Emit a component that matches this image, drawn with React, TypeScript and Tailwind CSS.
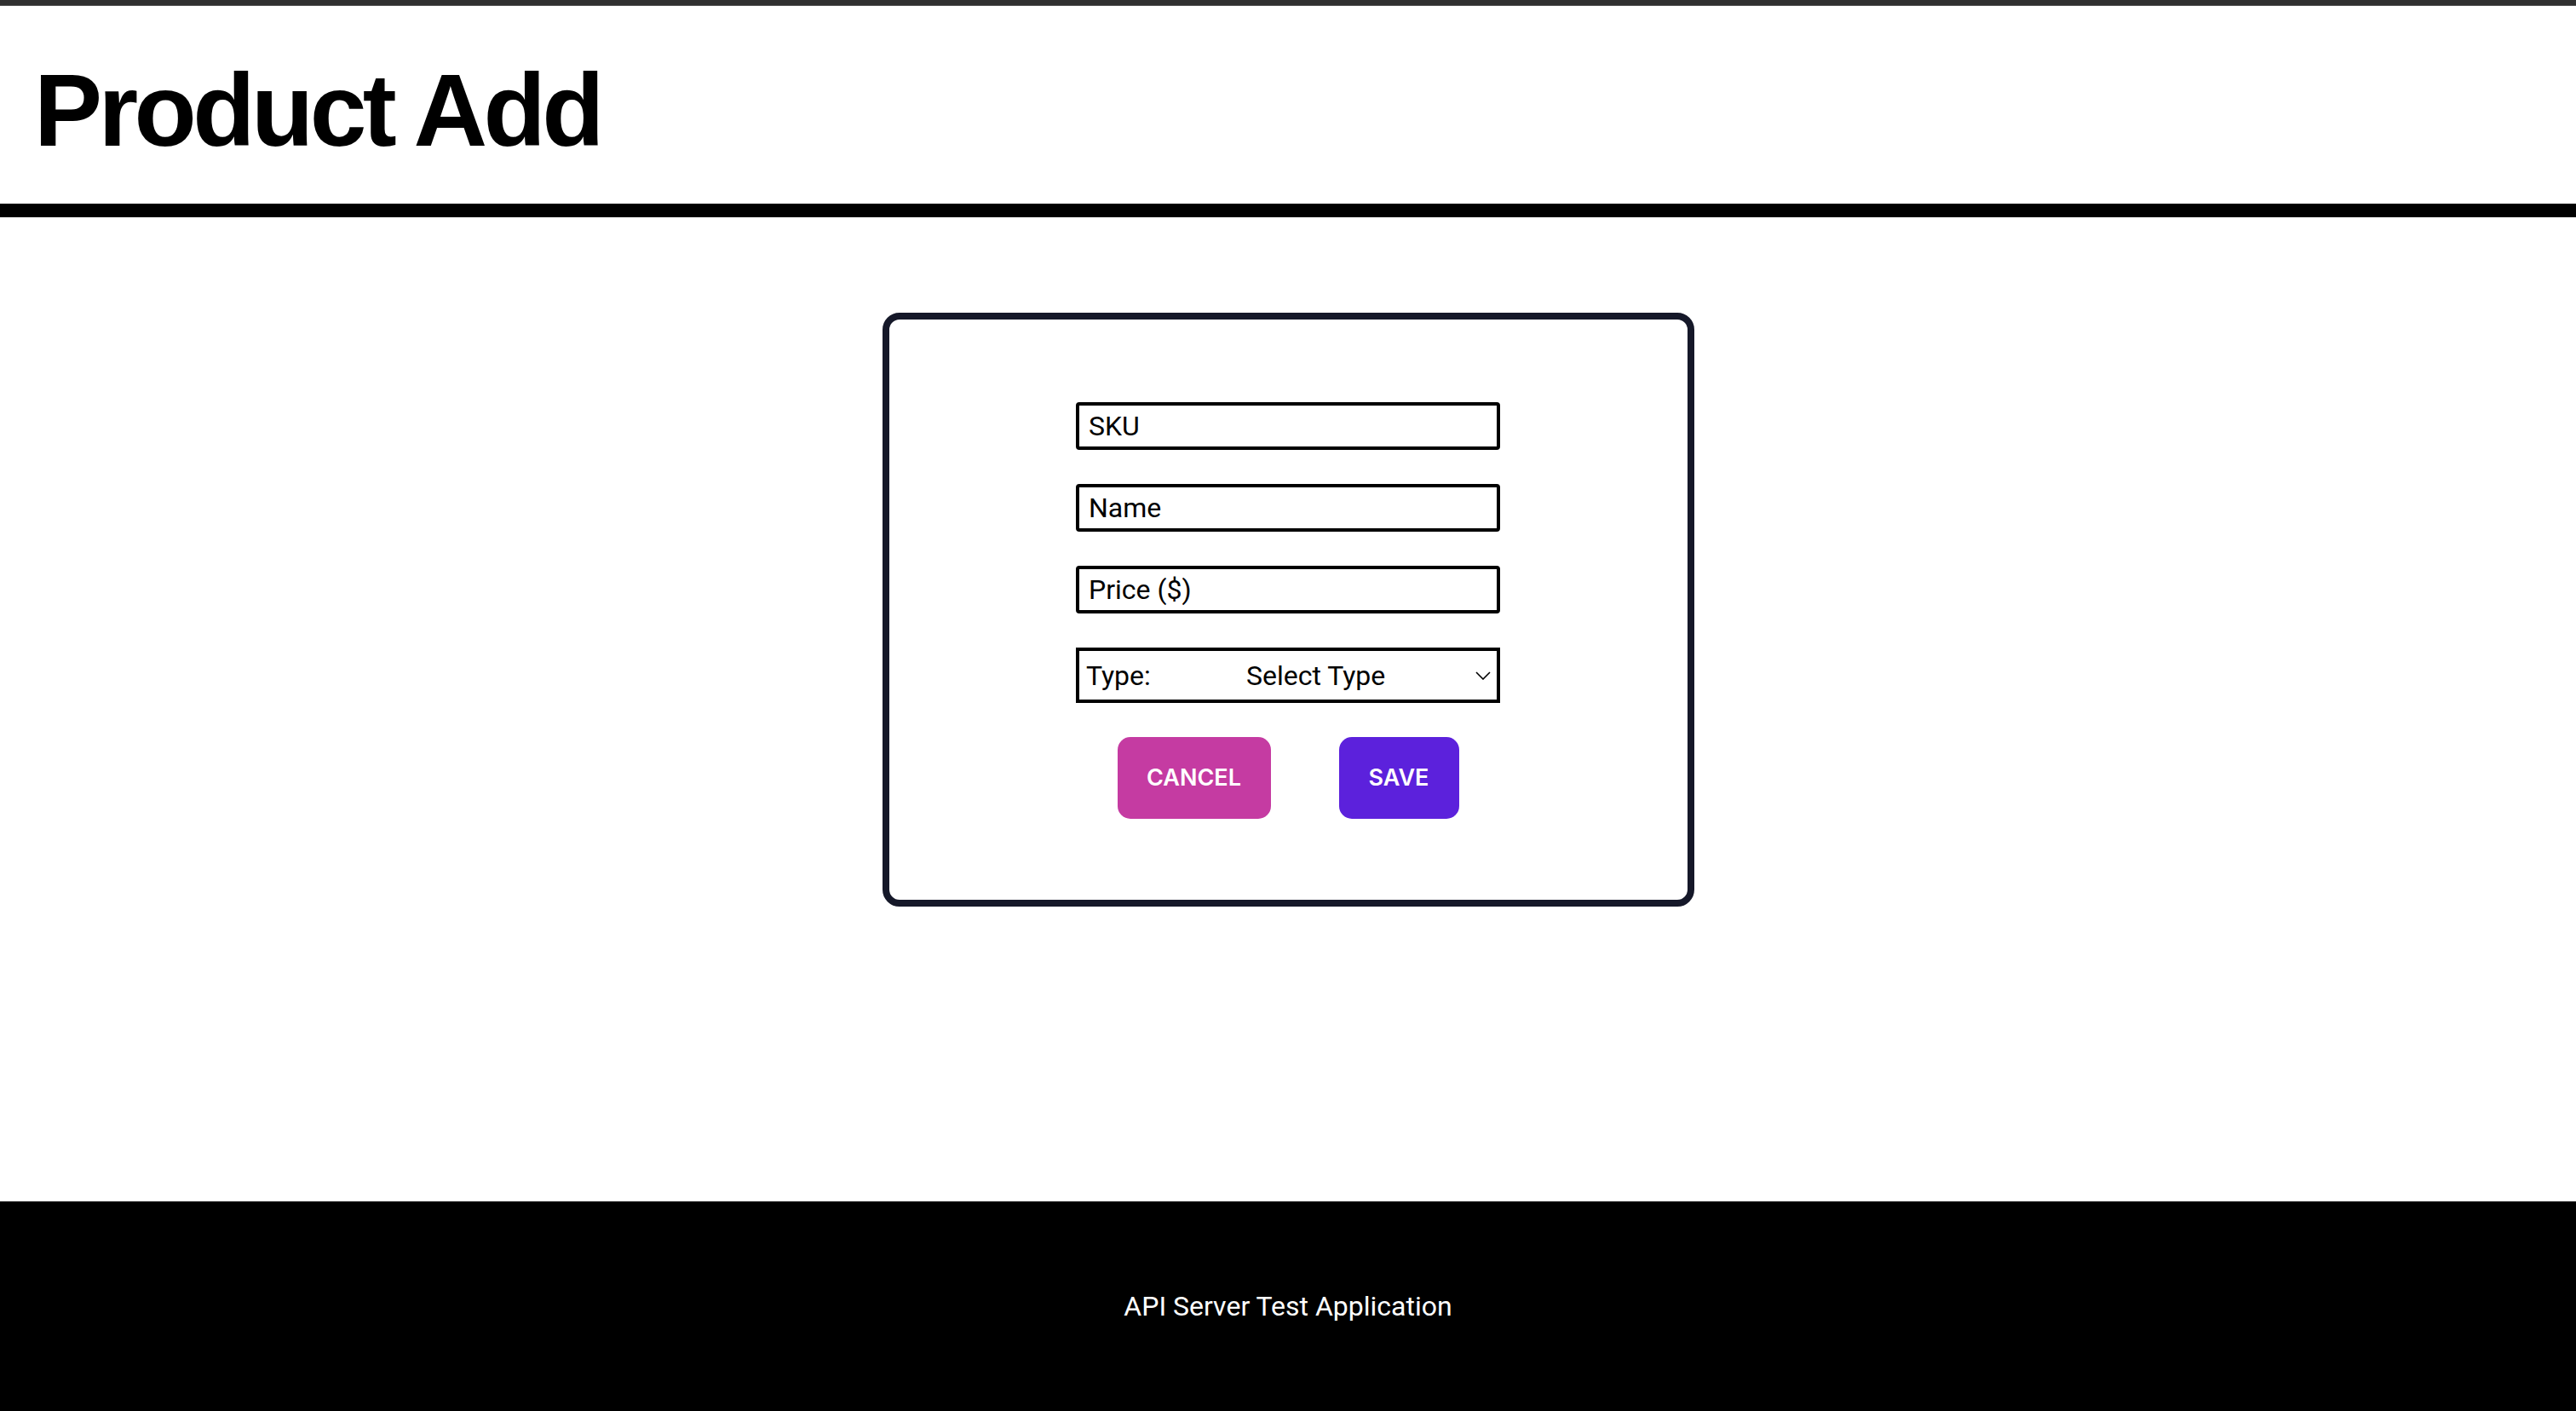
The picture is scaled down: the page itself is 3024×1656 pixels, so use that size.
import { useState } from 'react';

const fieldClass =
  'h-[56px] w-full rounded-[4px] border-4 border-black bg-white px-[11px] text-[32px] text-black outline-none placeholder:text-black';

export default function App() {
  const [sku, setSku] = useState('');
  const [name, setName] = useState('');
  const [price, setPrice] = useState('');
  const [type, setType] = useState('');

  return (
    <div className="flex min-h-screen flex-col bg-white font-['Roboto',sans-serif]">
      <div className="h-[7px] border-b border-[#555555] bg-[#303030]" />

      <header className="h-[232px] px-10 pt-[62px]">
        <h1 className="font-['Liberation_Sans',Arial,sans-serif] text-[120px] font-bold leading-[120px] tracking-[-4.6px] text-black">
          Product Add
        </h1>
      </header>
      <div className="h-4 bg-black" />

      <main className="flex flex-1 justify-center pt-[112px]">
        <div className="flex h-[697px] w-[953px] justify-center rounded-[20px] border-8 border-[#151829] pt-[97px]">
          <form className="flex w-[498px] flex-col gap-10" onSubmit={(e) => e.preventDefault()}>
            <input
              type="text"
              value={sku}
              onChange={(e) => setSku(e.target.value)}
              placeholder="SKU"
              className={fieldClass}
            />
            <input
              type="text"
              value={name}
              onChange={(e) => setName(e.target.value)}
              placeholder="Name"
              className={fieldClass}
            />
            <input
              type="text"
              value={price}
              onChange={(e) => setPrice(e.target.value)}
              placeholder="Price ($)"
              className={fieldClass}
            />

            <div className="flex h-[65px] items-center border-4 border-black text-[32px] text-black">
              <label htmlFor="productType" className="w-[196px] shrink-0 pl-[8px]">
                Type:
              </label>
              <select
                id="productType"
                value={type}
                onChange={(e) => setType(e.target.value)}
                className="min-w-0 flex-1 appearance-none bg-transparent text-[32px] text-black outline-none"
              >
                <option value="">Select Type</option>
                <option value="dvd">DVD</option>
                <option value="book">Book</option>
                <option value="furniture">Furniture</option>
              </select>
              <svg viewBox="0 0 18 10" className="mr-[7px] h-[10px] w-[18px] shrink-0" fill="none">
                <polyline points="1,1 9,9 17,1" stroke="black" strokeWidth="1.6" />
              </svg>
            </div>

            <div className="flex justify-center gap-20 font-['Inter',sans-serif]">
              <button
                type="button"
                className="h-[96px] w-[180px] rounded-[15px] bg-[#c53ba2] text-[27px] font-semibold uppercase text-white"
              >
                Cancel
              </button>
              <button
                type="submit"
                className="h-[96px] w-[141px] rounded-[15px] bg-[#5c21dc] text-[27px] font-semibold uppercase text-white"
              >
                Save
              </button>
            </div>
          </form>
        </div>
      </main>

      <footer className="flex h-[246px] items-center justify-center bg-black">
        <p className="text-[32px] text-white">API Server Test Application</p>
      </footer>
    </div>
  );
}
